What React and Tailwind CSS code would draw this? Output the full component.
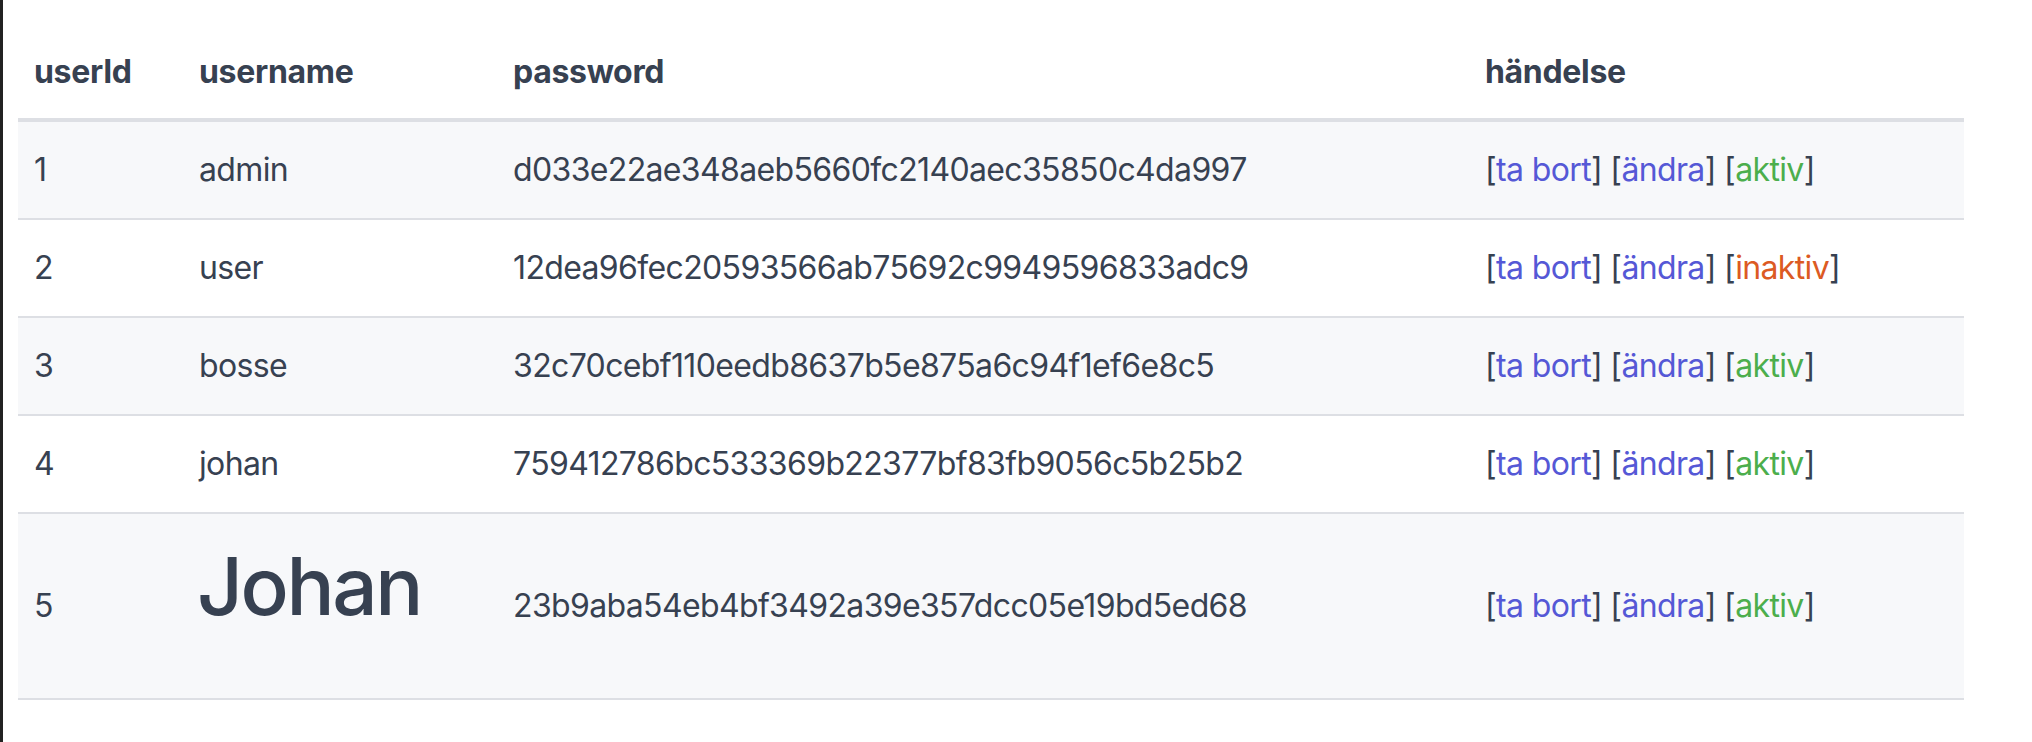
import React from 'react';

const users = [
  { id: 1, name: 'admin', hash: 'd033e22ae348aeb5660fc2140aec35850c4da997', active: true },
  { id: 2, name: 'user', hash: '12dea96fec20593566ab75692c9949596833adc9', active: false },
  { id: 3, name: 'bosse', hash: '32c70cebf110eedb8637b5e875a6c94f1ef6e8c5', active: true },
  { id: 4, name: 'johan', hash: '759412786bc533369b22377bf83fb9056c5b25b2', active: true },
  { id: 5, name: 'Johan', hash: '23b9aba54eb4bf3492a39e357dcc05e19bd5ed68', active: true, big: true },
];

const Actions = ({ active }) => (
  <span>
    [<a className="text-[#5558d6]">ta bort</a>] [<a className="text-[#5558d6]">ändra</a>] [
    {active ? (
      <a className="text-[#4cae4c]">aktiv</a>
    ) : (
      <a className="text-[#dc5a23]">inaktiv</a>
    )}
    ]
  </span>
);

const App = () => {
  return (
    <div className="min-h-screen bg-white border-l-[3px] border-[#222] pl-[15px] pt-[22px] pr-[68px] font-['Inter',sans-serif] text-[#374151]">
      <table className="w-[1946px] border-collapse text-left text-[32px] leading-[48px]">
        <thead>
          <tr className="border-b-4 border-[#dddfe4] tracking-[-0.01em]">
            <th className="w-[165px] px-4 pt-[26px] pb-[22px] font-bold">userId</th>
            <th className="w-[314px] px-4 pt-[26px] pb-[22px] font-bold">username</th>
            <th className="w-[972px] px-4 pt-[26px] pb-[22px] font-bold">password</th>
            <th className="px-4 pt-[26px] pb-[22px] font-bold">händelse</th>
          </tr>
        </thead>
        <tbody className="tracking-[-0.02em]">
          {users.map((u, i) => (
            <tr key={u.id} className={`border-b-2 border-[#dddfe4] ${i % 2 === 0 ? 'bg-[#f7f8fa]' : 'bg-white'}`}>
              <td className="px-4 py-6">{u.id}</td>
              <td className="px-4 py-6">
                {u.big ? (
                  <div className="-ml-[2px] text-[80px] leading-[96px] mb-[40px] font-medium tracking-[-0.03em]">{u.name}</div>
                ) : (
                  u.name
                )}
              </td>
              <td className="px-4 py-6">{u.hash}</td>
              <td className="px-4 py-6">
                <Actions active={u.active} />
              </td>
            </tr>
          ))}
        </tbody>
      </table>
    </div>
  );
};

export default App;
